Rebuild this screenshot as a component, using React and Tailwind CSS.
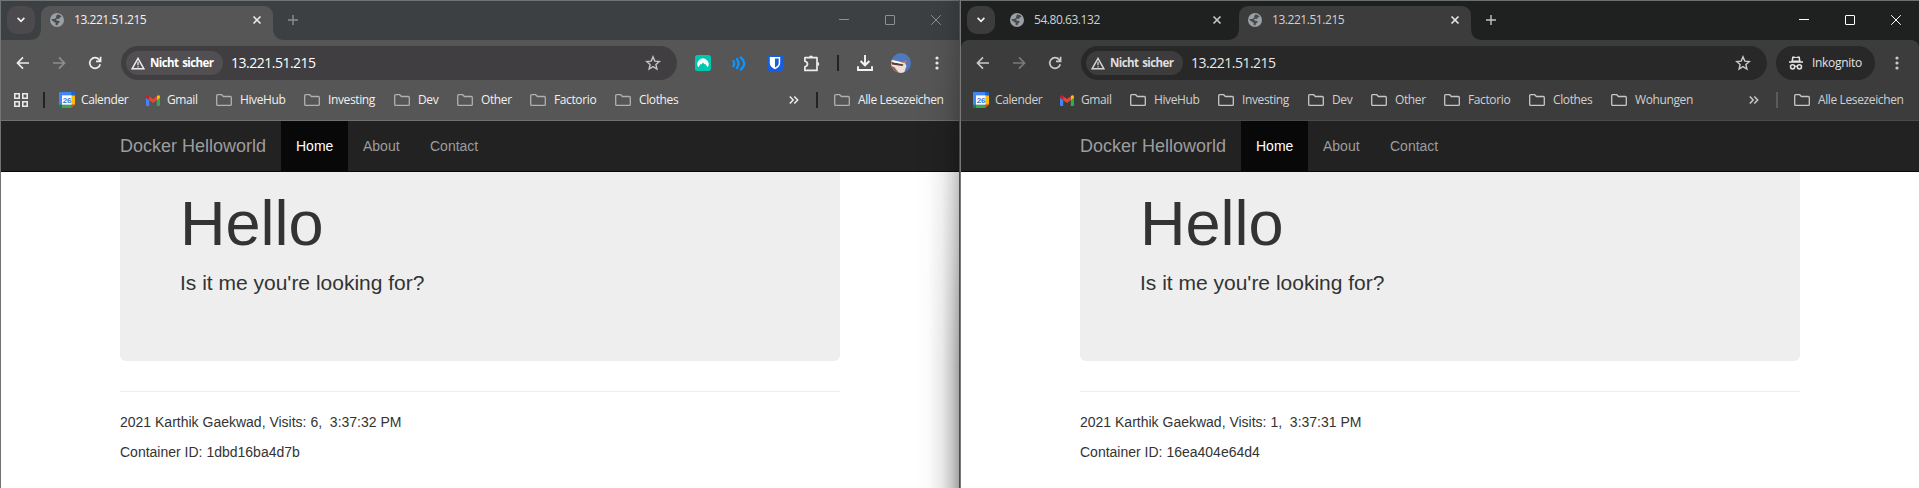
import React from "react";

const UI = "font-['Open_Sans','Noto_Sans',sans-serif]";

const themes = {
  normal: {
    strip: "bg-[#3c4043]",
    bar: "bg-[#565656]",
    box: "bg-[#413e41]",
    chip: "bg-[#524f52]",
    search: "bg-[#4d4a4d]",
    barFill: "#565656",
    text: "text-[#f1f1f1]",
    icon: "#ededed",
    dim: "#8f8f8f",
    folder: "#b0b0b0",
    winText: "text-[#8e9092]",
    plus: "#8b8e90",
    divider: "bg-[#232327]",
    line: "border-[#707070]",
    top: "border-[#707474]",
  },
  incognito: {
    strip: "bg-[#1f2120]",
    bar: "bg-[#3c3c3c]",
    box: "bg-[#282828]",
    chip: "bg-[#3c3c3c]",
    search: "bg-[#3c3c3c]",
    barFill: "#3c3c3c",
    text: "text-[#d0d0d0]",
    icon: "#c9c9c9",
    dim: "#7a7a7a",
    folder: "#c7c7c7",
    winText: "text-white",
    plus: "#c4c4c4",
    divider: "bg-[#5c5c5c]",
    line: "border-[#4a4a4a]",
    top: "border-[#6b706e]",
  },
};

function Globe() {
  return (
    <svg width="14" height="14" viewBox="0 0 14 14" className="shrink-0">
      <circle cx="7" cy="7" r="7" fill="#9aa0a6" />
      <path d="M7.2 1.6 C8.8 1.5 10.6 2.3 11.6 3.8 L9.8 4.4 L9 5.9 L6.9 5.7 L5.8 6.9 L7.6 7.8 L9.4 8.1 L9.5 9.6 L8 10.6 L7.3 12.4 L5.6 12.1 L5.7 10.1 L4.3 8.9 L1.6 7.1 L1.7 5.9 L4.5 6 L6.4 4.6 L6.1 3.2 Z" fill="#484c4f" />
    </svg>
  );
}

function Close({ color }) {
  return (
    <svg width="10" height="10" viewBox="0 0 10 10" className="shrink-0">
      <path d="M1.5 1.5 L8.5 8.5 M8.5 1.5 L1.5 8.5" stroke={color} strokeWidth="1.7" />
    </svg>
  );
}

function Folder({ color }) {
  return (
    <svg width="16" height="12" viewBox="0 0 16 12" className="shrink-0" fill="none">
      <path d="M1.6 0.7 H5.7 L7.4 2.5 H14.4 Q15.3 2.5 15.3 3.4 V10.4 Q15.3 11.3 14.4 11.3 H1.6 Q0.7 11.3 0.7 10.4 V1.6 Q0.7 0.7 1.6 0.7 Z" stroke={color} strokeWidth="1.3" />
    </svg>
  );
}

function CalendarIcon() {
  return (
    <svg width="16" height="16" viewBox="0 0 16 16" className="shrink-0">
      <path d="M0 1 Q0 0 1 0 H12.5 V3.5 H3 V13 H0 Z" fill="#4285f4" />
      <path d="M12.5 0 H15 Q16 0 16 1 V3.5 H12.5 Z" fill="#1967d2" />
      <path d="M12.5 3.5 H16 V12.7 H12.5 Z" fill="#fbbc04" />
      <path d="M3 12.7 H12.5 V16 H3 Z" fill="#34a853" />
      <path d="M0 12.7 H3 V16 H1 Q0 16 0 15 Z" fill="#188038" />
      <path d="M12.5 12.7 H16 L12.5 16 Z" fill="#ea4335" />
      <path d="M3 3.3 H12.7 V12.7 H3 Z" fill="#fff" />
      <text x="7.9" y="10.9" textAnchor="middle" fontSize="8" fontWeight="700" fontFamily="Liberation Sans, sans-serif" fill="#3b73d9">26</text>
    </svg>
  );
}

function GmailIcon() {
  return (
    <svg width="14" height="11" viewBox="0 0 14 11" className="shrink-0">
      <path d="M0 2 L3.2 4.2 V11 H1 Q0 11 0 10 Z" fill="#4285f4" />
      <path d="M14 2 L10.8 4.2 V11 H13 Q14 11 14 10 Z" fill="#34a853" />
      <path d="M10.8 1.2 L12 0.3 Q14 -0.4 14 1.7 V2.8 L10.8 5.2 Z" fill="#fbbc04" />
      <path d="M3.2 1.2 L2 0.3 Q0 -0.4 0 1.7 V2.8 L3.2 5.2 Z" fill="#c5221f" />
      <path d="M3.2 1.2 L7 4.1 L10.8 1.2 V5.2 L7 8 L3.2 5.2 Z" fill="#ea4335" />
    </svg>
  );
}

function Tab({ t, title, active }) {
  return (
    <div
      className={`relative flex h-[34px] w-[232px] shrink-0 items-center pl-[9px] pr-[11px] ${
        active ? `${t.bar} rounded-t-[9px]` : ""
      }`}
    >
      {active && (
        <>
          <svg className="absolute bottom-0 -left-[12px]" width="12" height="12" viewBox="0 0 12 12">
            <path d="M12 0 V12 H0 Q12 12 12 0 Z" fill={t.barFill} />
          </svg>
          <svg className="absolute bottom-0 -right-[12px]" width="12" height="12" viewBox="0 0 12 12">
            <path d="M0 0 V12 H12 Q0 12 0 0 Z" fill={t.barFill} />
          </svg>
        </>
      )}
      <div className="mb-[6px] flex w-full items-center">
        <Globe />
        <span className="ml-[10px] grow whitespace-nowrap text-xs leading-4 tracking-[-0.45px]">{title}</span>
        <Close color={active ? "#e6e6e6" : "#c4c4c4"} />
      </div>
    </div>
  );
}

function TabStrip({ t, tabs }) {
  return (
    <div className={`flex h-[39px] items-end ${t.strip} ${t.text}`}>
      <div className={`mb-[6px] ml-[6px] flex size-7 shrink-0 items-center justify-center rounded-[10px] ${t.search}`}>
        <svg width="8" height="6" viewBox="0 0 8 6">
          <path d="M0.6 0.9 L4 4.4 L7.4 0.9" fill="none" stroke="#f0f0f0" strokeWidth="1.7" />
        </svg>
      </div>
      <div className="ml-[6px] flex gap-[6px]">
        {tabs.map((tab) => (
          <Tab key={tab.title} t={t} {...tab} />
        ))}
      </div>
      <svg width="10" height="10" viewBox="0 0 10 10" className="mb-[15px] ml-[15px]">
        <path d="M5 0 V10 M0 5 H10" stroke={t.plus} strokeWidth="1.4" />
      </svg>
      <div className={`mb-[14px] ml-auto mr-[18px] flex gap-9 ${t.winText}`}>
        <svg width="10" height="11" viewBox="0 0 10 11"><path d="M0 4.5 H10" stroke="currentColor" /></svg>
        <svg width="10" height="11" viewBox="0 0 10 11"><rect x=".5" y=".5" width="9" height="9" rx=".5" fill="none" stroke="currentColor" /></svg>
        <svg width="10" height="11" viewBox="0 0 10 11"><path d="M0.2 0.2 L9.8 9.8 M9.8 0.2 L0.2 9.8" stroke="currentColor" /></svg>
      </div>
    </div>
  );
}

function Dots({ color }) {
  return (
    <svg width="4" height="14" viewBox="0 0 4 14" className="shrink-0">
      <circle cx="2" cy="2" r="1.6" fill={color} />
      <circle cx="2" cy="7" r="1.6" fill={color} />
      <circle cx="2" cy="12" r="1.6" fill={color} />
    </svg>
  );
}

function Extensions({ t }) {
  return (
    <div className="ml-[18px] flex items-center">
      <svg width="16" height="16" viewBox="0 0 16 16">
        <rect width="16" height="16" rx="2.5" fill="#00c8b0" />
        <path d="M3.4 12.3 A5.6 5.6 0 1 1 12.6 12.3 L10 8.6 L9.3 9.4 L8 7.2 L6.6 9.4 L5.9 8.6 Z" fill="#fff" />
      </svg>
      <svg width="14" height="15" viewBox="0 0 14 15" className="ml-[21px]" fill="none" stroke="#0a95ff" strokeWidth="2.3" strokeLinecap="round">
        <path d="M1.4 5 Q3 7.5 1.4 10.2 M5 3 Q8 7.5 5 12 M8.8 1.4 Q15.6 7.5 8.8 13.6" />
      </svg>
      <svg width="16" height="16" viewBox="0 0 16 16" className="ml-[21px]">
        <rect width="16" height="16" rx="2" fill="#175ddc" />
        <path d="M2.8 2 H13.2 V8 Q13.2 12 8 14.3 Q2.8 12 2.8 8 Z" fill="#fff" />
        <path d="M8 3.6 H11.7 V8 Q11.7 10.7 8 12.6 Z" fill="#175ddc" />
      </svg>
      <svg width="17" height="17" viewBox="0 0 17 17" className="ml-[20px]" fill={t.icon}>
        <path d="M1.9 2.7 H14 V15.4 H1.9 V11.7 Q4.5 11 4.5 9 Q4.5 7 1.9 6.3 Z" fill="none" stroke={t.icon} strokeWidth="1.7" strokeLinejoin="round" />
        <path d="M6 2.5 A2 2 0 0 1 10 2.5 Z M14.3 7 A2 2 0 0 1 14.3 11 Z" />
      </svg>
      <div className={`ml-[17px] h-4 w-[2px] ${t.divider}`} />
      <svg width="16" height="16" viewBox="0 0 16 16" className="ml-[18px]" fill="none" stroke="#f3f3f3" strokeWidth="1.9">
        <path d="M8 0 V10.2 M3.6 6 L8 10.3 L12.4 6 M1 11.3 V15 H15 V11.3" />
      </svg>
      <svg width="20" height="20" viewBox="0 0 20 20" className="ml-[18px]">
        <clipPath id="avatar"><circle cx="10" cy="10" r="10" /></clipPath>
        <g clipPath="url(#avatar)">
          <rect width="20" height="20" fill="#4f78bd" />
          <path d="M0 6.5 L5 7.8 L14 10 L15.5 13 L13 20 H3 L0 14 Z" fill="#efe0d3" />
          <path d="M0 9 L6 10 L12.5 11.6 L11.5 13 L1 11.4 Z" fill="#5a3a3c" />
          <path d="M2 8 L9 9 L9.5 10.4 L3 9.6 Z" fill="#fff" />
          <path d="M11 8.8 L15.5 7.6 L14.8 10.8 Z" fill="#f06c25" />
          <path d="M0 12.5 L3.5 14.5 L8 20 H0 Z" fill="#8f5a60" />
        </g>
      </svg>
      <span className="w-[24px]" />
      <Dots color={t.icon} />
      <span className="w-[20px]" />
    </div>
  );
}

function IncognitoBadge({ t }) {
  return (
    <div className="ml-[9px] flex items-center">
      <div className={`flex h-[34px] w-[99px] items-center rounded-full pl-[13px] text-[#e3e3e3] ${t.box}`}>
        <svg width="14" height="14" viewBox="0 0 14 14" className="shrink-0">
          <path d="M3.2 0.6 H5.4 L7 1.2 L8.6 0.6 H10.8 L11.6 5.3 H14 V6.8 H0 V5.3 H2.4 Z" fill="#e3e3e3" />
          <path d="M4.5 2 H9.5 L9.9 4.6 H4.1 Z" fill="#282828" />
          <path d="M5.7 10.6 Q7 9.7 8.3 10.6" fill="none" stroke="#e3e3e3" strokeWidth="1.2" />
          <circle cx="3.6" cy="10.8" r="2.1" fill="none" stroke="#e3e3e3" strokeWidth="1.5" />
          <circle cx="10.4" cy="10.8" r="2.1" fill="none" stroke="#e3e3e3" strokeWidth="1.5" />
        </svg>
        <span className="ml-[9px] text-xs leading-4 tracking-[-0.3px]">Inkognito</span>
      </div>
      <span className="w-[20px]" />
      <Dots color={t.icon} />
      <span className="w-[20px]" />
    </div>
  );
}

function Toolbar({ t, incognito }) {
  return (
    <div className="flex h-[46px] items-center pl-[15px]">
      <svg width="14" height="14" viewBox="0 0 14 14" fill="none" stroke={t.icon} strokeWidth="1.7">
        <path d="M13 7 H1.6 M7 1.4 L1.5 7 L7 12.6" />
      </svg>
      <svg width="14" height="14" viewBox="0 0 14 14" className="ml-[22px]" fill="none" stroke={t.dim} strokeWidth="1.7">
        <path d="M1 7 H12.4 M7 1.4 L12.5 7 L7 12.6" />
      </svg>
      <svg width="14" height="14" viewBox="0 0 14 14" className="ml-[22px]" fill="none" stroke={t.icon} strokeWidth="1.7">
        <path d="M12.2 8.2 A5.3 5.3 0 1 1 11.2 3.7 L12.6 5.2 M12.6 0.8 V5.4 H8" />
      </svg>
      <div className={`ml-[19px] flex h-[34px] grow items-center rounded-full pl-[5px] pr-4 ${t.box}`}>
        <div className={`flex h-6 w-[97px] shrink-0 items-center rounded-full pl-[5px] ${t.chip}`}>
          <svg width="14" height="13" viewBox="0 0 14 13" className="shrink-0" fill="none" stroke={incognito ? "#d5d5d5" : "#ededed"}>
            <path d="M7 1.3 L12.9 11.8 H1.1 Z" strokeWidth="1.4" />
            <path d="M7 4.8 V8.2 M7 9.2 V10.6" strokeWidth="1.3" />
          </svg>
          <span className={`ml-[5px] whitespace-nowrap text-[11.5px] font-bold leading-4 tracking-[-0.6px] [word-spacing:1.5px] ${incognito ? "text-[#dedede]" : "text-white"}`}>
            Nicht sicher
          </span>
        </div>
        <span className={`ml-[8px] grow text-sm leading-5 tracking-[-0.5px] ${incognito ? "text-[#e8e8e8]" : "text-white"}`}>13.221.51.215</span>
        <svg width="16" height="16" viewBox="0 0 16 16" fill="none" stroke={incognito ? "#c9c9c9" : "#c4c4c4"} strokeWidth="1.4">
          <path d="M8 1.9 L9.8 6.1 L14.3 6.5 L10.9 9.5 L11.9 14 L8 11.6 L4.1 14 L5.1 9.5 L1.7 6.5 L6.2 6.1 Z" />
        </svg>
      </div>
      {incognito ? <IncognitoBadge t={t} /> : <Extensions t={t} />}
    </div>
  );
}

const folders = [
  { name: "HiveHub", w: "w-[88px]" },
  { name: "Investing", w: "w-[90px]" },
  { name: "Dev", w: "w-[63px]" },
  { name: "Other", w: "w-[73px]" },
  { name: "Factorio", w: "w-[85px]" },
  { name: "Clothes", w: "w-[82px]" },
];

function Bookmarks({ t, incognito }) {
  const items = incognito ? [...folders, { name: "Wohungen", w: "w-[84px]" }] : folders;
  return (
    <div className={`flex h-[35px] items-center whitespace-nowrap border-b pb-[6px] text-xs leading-4 tracking-[-0.38px] ${t.line} ${t.text} ${incognito ? "pl-3" : "pl-[13px]"}`}>
      {!incognito && (
        <>
          <svg width="14" height="14" viewBox="0 0 14 14" className="shrink-0" fill="none" stroke="#e8e8e8" strokeWidth="1.6">
            <path d="M.8 .8 H5.2 V5.2 H.8 Z M8.8 .8 H13.2 V5.2 H8.8 Z M.8 8.8 H5.2 V13.2 H.8 Z M8.8 8.8 H13.2 V13.2 H8.8 Z" />
          </svg>
          <div className={`ml-[15px] mr-[14px] h-4 w-[2px] ${t.divider}`} />
        </>
      )}
      <div className="flex w-[87px] shrink-0 items-center gap-[6px]">
        <CalendarIcon />
        <span>Calender</span>
      </div>
      <div className="flex w-[70px] shrink-0 items-center gap-[7px]">
        <GmailIcon />
        <span>Gmail</span>
      </div>
      {items.map((f) => (
        <div key={f.name} className={`flex shrink-0 items-center gap-2 ${f.w}`}>
          <Folder color={t.folder} />
          <span>{f.name}</span>
        </div>
      ))}
      <svg width="10" height="8" viewBox="0 0 10 8" className="ml-auto shrink-0" fill="none" stroke={t.icon} strokeWidth="1.5">
        <path d="M.8 .5 L4.2 4 L.8 7.5 M5.3 .5 L8.7 4 L5.3 7.5" />
      </svg>
      <div className={`ml-[17px] mr-4 h-4 w-[2px] shrink-0 ${t.divider}`} />
      <div className="flex w-[125px] shrink-0 items-center gap-2">
        <Folder color={t.folder} />
        <span>Alle Lesezeichen</span>
      </div>
    </div>
  );
}

function Page({ visits, time, container }) {
  return (
    <div className="grow bg-white font-['Liberation_Sans',Arial,sans-serif] text-sm leading-5 text-[#333]">
      <nav className="flex h-[51px] border-b border-[#080808] bg-[#222] pl-[119px] text-[#9d9d9d]">
        <span className="w-[161px] pt-[15px] text-[18px]">Docker Helloworld</span>
        <span className="h-[50px] w-[67px] bg-[#080808] pl-[15px] pt-[15px] text-white">Home</span>
        <span className="w-[67px] pl-[15px] pt-[15px]">About</span>
        <span className="pl-[15px] pt-[15px]">Contact</span>
      </nav>
      <div className="ml-[119px] w-[720px]">
        <div className="h-[189px] rounded-b-md bg-[#eee] px-[60px] pt-[17px]">
          <h1 className="text-[63px] leading-[69px]">Hello</h1>
          <p className="mt-[10px] text-[21px] leading-[30px]">Is it me you're looking for?</p>
        </div>
        <hr className="mb-5 mt-[30px] border-[#eee]" />
        <p className="whitespace-pre">{`2021 Karthik Gaekwad, Visits: ${visits},  ${time}`}</p>
        <p className="mt-[10px]">Container ID: {container}</p>
      </div>
    </div>
  );
}

function BrowserWindow({ theme, tabs, page, incognito }) {
  const t = themes[theme];
  return (
    <div className={`flex h-full w-full flex-col border-t ${t.top} ${UI}`}>
      <TabStrip t={t} tabs={tabs} />
      <div className={t.strip}>
        <div className={`${t.bar} ${incognito ? "rounded-t-[8px]" : ""}`}>
          <Toolbar t={t} incognito={incognito} />
          <Bookmarks t={t} incognito={incognito} />
        </div>
      </div>
      <Page {...page} />
    </div>
  );
}

export default function App() {
  return (
    <div className="flex h-[488px] w-[1919px] overflow-hidden bg-white">
      <div className="relative w-[959px] shrink-0 border-l border-[#717474]">
        <BrowserWindow
          theme="normal"
          tabs={[{ title: "13.221.51.215", active: true }]}
          page={{ visits: 6, time: "3:37:32 PM", container: "1dbd16ba4d7b" }}
        />
        <div className="pointer-events-none absolute inset-y-0 right-0 w-[44px] bg-[linear-gradient(to_right,transparent,rgba(0,0,0,0.015)_30%,rgba(0,0,0,0.09)_62%,rgba(0,0,0,0.22)_84%,rgba(0,0,0,0.36))] [mask-image:linear-gradient(to_bottom,rgba(0,0,0,0.3),rgba(0,0,0,0.65)_35%,black_75%)]" />
      </div>
      <div className="w-[2px] shrink-0 border-l border-[#4c4c4c] bg-[#787878]" />
      <div className="w-[958px] shrink-0">
        <BrowserWindow
          theme="incognito"
          incognito
          tabs={[{ title: "54.80.63.132" }, { title: "13.221.51.215", active: true }]}
          page={{ visits: 1, time: "3:37:31 PM", container: "16ea404e64d4" }}
        />
      </div>
    </div>
  );
}
